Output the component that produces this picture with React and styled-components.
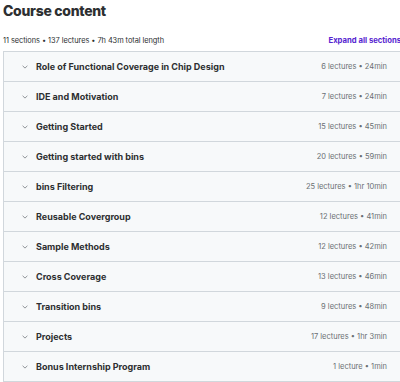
import React from "react";
import styled, { createGlobalStyle } from "styled-components";

const Global = createGlobalStyle`
  html, body { margin: 0; padding: 0; background: #fff; }
  body { font-family: Inter, "Noto Sans", sans-serif; color: #2d2f31; }
`;

const Page = styled.div`
  width: 400px;
  height: 382px;
  overflow: hidden;
  padding: 3px 0 0 3px;
  box-sizing: border-box;
`;

const Title = styled.h2`
  margin: 0;
  font-size: 14px;
  font-weight: 800;
  line-height: 16px;
  letter-spacing: -0.3px;
`;

const Meta = styled.div`
  display: flex;
  justify-content: space-between;
  align-items: center;
  margin-top: 15px;
  height: 12px;
  font-size: 7.4px;
`;

const Summary = styled.span`
  color: #2d2f31;
  letter-spacing: -0.05px;
`;

const ExpandAll = styled.button`
  border: none;
  background: none;
  padding: 0;
  font: inherit;
  font-weight: 700;
  color: #5624d0;
  font-size: 7.7px;
  margin-right: -1px;
`;

const List = styled.div`
  margin-top: 5px;
  width: 420px;
  border: 1px solid #d1d7dc;
  border-right: none;
`;

const Row = styled.div`
  display: flex;
  align-items: center;
  height: 29px;
  background: #f7f9fa;
  padding-left: 18px;
  padding-right: 37px;
  & + & { border-top: 1px solid #d1d7dc; }
`;

const Chevron = styled.svg`
  width: 6px;
  height: 4px;
  margin-right: 8px;
  flex: none;
`;

const SectionTitle = styled.span`
  flex: 1;
  font-size: 9px;
  font-weight: 700;
  color: #2d2f31;
`;

const SectionMeta = styled.span`
  font-size: 7.5px;
  color: #6a6f73;
`;

const sections = [
  ["Role of Functional Coverage in Chip Design", "6 lectures • 24min"],
  ["IDE and Motivation", "7 lectures • 24min"],
  ["Getting Started", "15 lectures • 45min"],
  ["Getting started with bins", "20 lectures • 59min"],
  ["bins Filtering", "25 lectures • 1hr 10min"],
  ["Reusable Covergroup", "12 lectures • 41min"],
  ["Sample Methods", "12 lectures • 42min"],
  ["Cross Coverage", "13 lectures • 46min"],
  ["Transition bins", "9 lectures • 48min"],
  ["Projects", "17 lectures • 1hr 3min"],
  ["Bonus Internship Program", "1 lecture • 1min"],
];

export default function App() {
  return (
    <Page>
      <Global />
      <Title>Course content</Title>
      <Meta>
        <Summary>11 sections • 137 lectures • 7h 43m total length</Summary>
        <ExpandAll>Expand all sections</ExpandAll>
      </Meta>
      <List>
        {sections.map(([t, m]) => (
          <Row key={t}>
            <Chevron viewBox="0 0 6 4">
              <path d="M0.6 0.8 L3 3.1 L5.4 0.8" fill="none" stroke="#7d8286" strokeWidth="0.85" />
            </Chevron>
            <SectionTitle>{t}</SectionTitle>
            <SectionMeta>{m}</SectionMeta>
          </Row>
        ))}
      </List>
    </Page>
  );
}
